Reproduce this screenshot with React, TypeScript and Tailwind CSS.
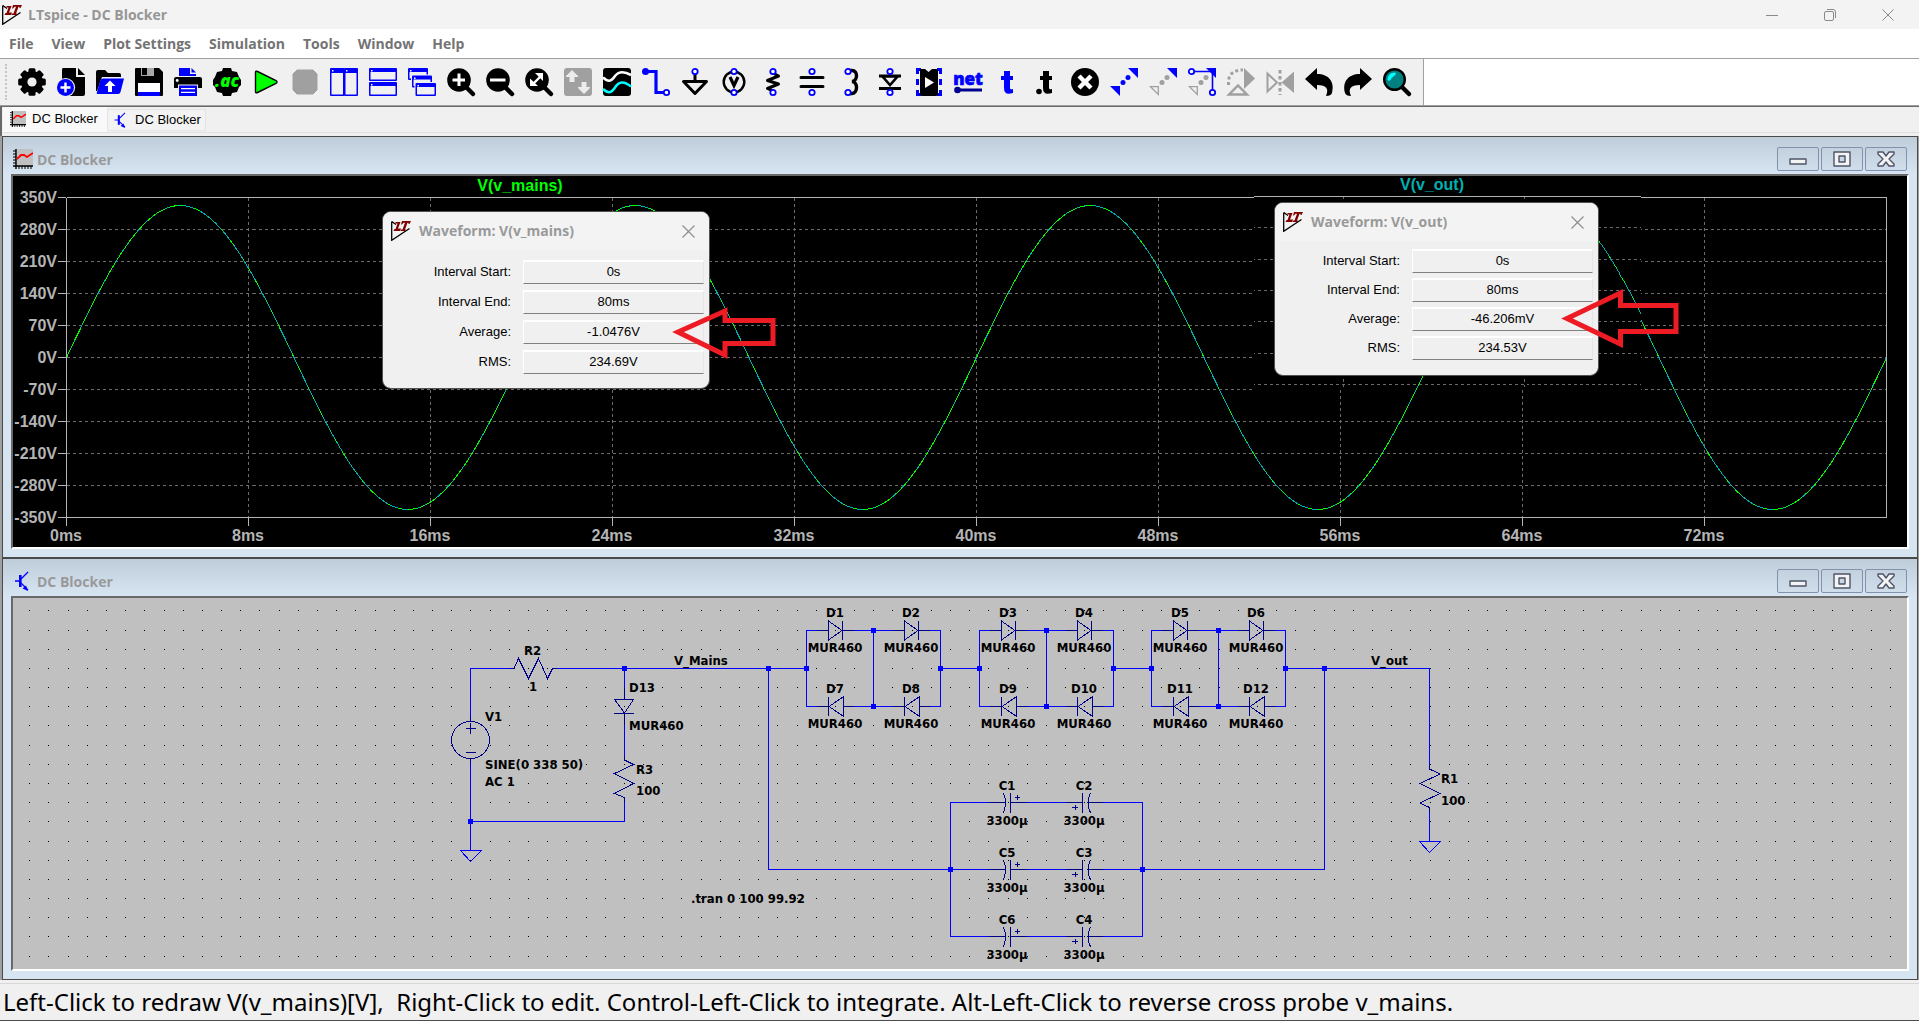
import React, { useId } from "react";

const GRAY = "#a0a0a0";
const BLUE = "#0000ff";
const NAVY = "#000084";

/* ---------- Toolbar icons ---------- */

const Pin = ({ x, y }: { x: number; y: number }) => (
  <circle cx={x} cy={y} r={2.7} fill="#fff" stroke={BLUE} strokeWidth={1.8} />
);

const Lens = ({ children }: { children?: React.ReactNode }) => (
  <>
    <circle cx={12} cy={12} r={11.8} />
    <path d="M18 18L26 26" stroke="#000" strokeWidth={4.5} strokeLinecap="round" />
    {children}
  </>
);

const MiniWindow = ({ x, y, w, h, bar = 5 }: { x: number; y: number; w: number; h: number; bar?: number }) => (
  <>
    <rect x={x} y={y} width={w} height={h} rx={1} fill={BLUE} />
    <rect x={x + 1.5} y={y + bar} width={w - 3} height={h - bar - 1.5} fill="#f0f0f0" />
    <rect x={x + 2} y={y + 2} width={1.5} height={1.5} fill="#fff" />
  </>
);

const Teeth = ({ r }: { r: number }) => (
  <>
    {[0, 45, 90, 135, 180, 225, 270, 315].map((a) => (
      <rect key={a} x={10.5} y={14 - r} width={7} height={8} rx={1.5} transform={`rotate(${a} 14 14)`} />
    ))}
  </>
);

const DragCorners = ({ from, mid }: { from: React.ReactNode; mid: string }) => (
  <>
    <path d="M18 0H28V10Z" fill={BLUE} />
    <circle cx={18} cy={9.5} r={2.5} fill={mid} />
    <circle cx={13} cy={14.5} r={2.5} fill={mid} />
    {from}
  </>
);

const tools: { name: string; icon: React.ReactNode }[] = [
  {
    name: "Settings",
    icon: (
      <>
        <Teeth r={13.8} />
        <circle cx={14} cy={14} r={11} />
        <circle cx={14} cy={14} r={4.6} fill="#f0f0f0" />
      </>
    ),
  },
  {
    name: "New schematic",
    icon: (
      <>
        <path d="M6 0H19V9H28V26Q28 28 26 28H8Q5 28 5 26V2Q5 0 6 0Z" />
        <path d="M21 0L28 7H21Z" />
        <circle cx={8.5} cy={19.5} r={9.6} fill="#f0f0f0" />
        <circle cx={8.5} cy={19.5} r={8.5} fill={BLUE} />
        <path d="M8.5 14.5V24.5M3.5 19.5H13.5" stroke="#fff" strokeWidth={2.4} />
      </>
    ),
  },
  {
    name: "Open",
    icon: (
      <>
        <path d="M0 4Q0 2 2 2H9L12 5H23Q25 5 25 7V9H6L1 23H0Z" />
        <path d="M7 10.5H28L24.5 24Q24 26 22 26H2Q0 26 1 24L4.5 12Q5 10.5 7 10.5Z" fill={BLUE} />
        <path d="M14 12.5L19.5 18H16V24H12V18H8.5Z" fill="#fff" />
      </>
    ),
  },
  {
    name: "Save",
    icon: (
      <>
        <path d="M1 0H6V8H19V0H24L28 4V27Q28 28 27 28H1Q0 28 0 27V1Q0 0 1 0Z" />
        <path d="M6 0H19V8H6Z" fill="#a8a8a8" />
        <path d="M7 0H12V7H7Z" />
        <path d="M3 15H25V24H3Z" fill="#fff" />
        <path d="M3 24H25V28H3Z" fill={BLUE} />
      </>
    ),
  },
  {
    name: "Print",
    icon: (
      <>
        <path d="M5 8V0H16V6H22V8Z" fill={BLUE} />
        <path d="M17.5 0L22 4.5H17.5Z" fill={BLUE} />
        <path d="M2 9H26Q28 9 28 11V20H0V11Q0 9 2 9Z" />
        <circle cx={3.2} cy={12.5} r={1.4} fill="#fff" />
        <path d="M4 16.5H24V28H4Z" fill="#f0f0f0" />
        <path d="M5 17.5H23V28H5Z" fill={BLUE} />
        <path d="M7 20.7H21M7 24.4H21" stroke="#fff" strokeWidth={1.3} />
      </>
    ),
  },
  {
    name: "AC analysis",
    icon: (
      <>
        <path d="M10 0H18L19 3L24 4L26 9L28 12V17L26 19L24 24L19 25L18 28H10L9 25L4 24L2 19L0 17V12L2 9L4 4L9 3Z" />
        <text x={14} y={19} textAnchor="middle" fill="#00ff00" className="font-['Open_Sans',sans-serif] text-[17px] font-extrabold italic">
          .ac
        </text>
      </>
    ),
  },
  {
    name: "Run",
    icon: <path d="M3.5 4.5Q3.5 2.5 5.5 3.5L24 12.5Q26 14 24 15.5L5.5 24.5Q3.5 25.5 3.5 23.5Z" fill="#00ff00" stroke="#000" strokeWidth={1.4} />,
  },
  { name: "Stop", icon: <path d="M6 2H22L26 6V22L22 26H6L2 22V6Z" fill={GRAY} stroke={GRAY} strokeLinejoin="round" /> },
  {
    name: "Tile vertically",
    icon: (
      <>
        <MiniWindow x={0} y={0} w={14.5} h={28} />
        <MiniWindow x={14} y={0} w={14} h={28} />
      </>
    ),
  },
  {
    name: "Tile horizontally",
    icon: (
      <>
        <MiniWindow x={0} y={0} w={28} h={13} bar={4} />
        <MiniWindow x={0} y={14} w={28} h={14} bar={4} />
      </>
    ),
  },
  {
    name: "Cascade",
    icon: (
      <>
        <MiniWindow x={0} y={0} w={20} h={12} bar={4} />
        <rect x={3} y={6.5} width={21.5} height={13} fill="#f0f0f0" />
        <MiniWindow x={4} y={7.5} w={20} h={12} bar={4} />
        <rect x={6.5} y={14} width={21.5} height={13} fill="#f0f0f0" />
        <MiniWindow x={7.5} y={15} w={20.5} h={13} bar={4} />
      </>
    ),
  },
  { name: "Zoom in", icon: <Lens><path d="M12 5.5V18M5.5 12H18" stroke="#fff" strokeWidth={3} /></Lens> },
  { name: "Zoom out", icon: <Lens><path d="M4 12H19.5" stroke="#fff" strokeWidth={3} /></Lens> },
  {
    name: "Zoom to fit",
    icon: (
      <Lens>
        <path d="M8 16L16 8" stroke="#fff" strokeWidth={2.4} />
        <path d="M10 5H18V13ZM5 10.5V18H13Z" fill="#fff" />
      </Lens>
    ),
  },
  {
    name: "Autorange",
    icon: (
      <>
        <rect width={28} height={28} rx={3} fill={GRAY} />
        <path d="M8 2L14 8V9H10.5V14H5.5V9H2V8ZM20 26L14 20V19H17.5V14H22.5V19H26V20Z" fill="#ececec" />
      </>
    ),
  },
  {
    name: "Waveforms",
    icon: (
      <>
        <rect width={28} height={28} rx={3} />
        <path d="M0 9.5C5 14 8 14 12 8C16 3 21 3 28 7" fill="none" stroke="#fff" strokeWidth={2.6} />
        <path d="M0 21C5 25.5 8 25.5 12 19.5C16 13 21 13 28 18.5" fill="none" stroke="#00ffff" strokeWidth={2.6} />
      </>
    ),
  },
  {
    name: "Wire",
    icon: (
      <>
        <path d="M3 3.5H14V24.5H22" fill="none" stroke={BLUE} strokeWidth={3.2} />
        <circle cx={3.5} cy={3.5} r={3.5} fill={BLUE} />
        <Pin x={24.5} y={24.5} />
      </>
    ),
  },
  {
    name: "Ground",
    icon: (
      <>
        <path d="M14 5V14" stroke="#000" strokeWidth={3} />
        <path d="M2.5 13.5H25.5L14 25.5Z" fill="#f0f0f0" stroke="#000" strokeWidth={3} strokeLinejoin="round" />
        <Pin x={14} y={3.5} />
      </>
    ),
  },
  {
    name: "Voltage source",
    icon: (
      <>
        <circle cx={14} cy={14} r={10.3} fill="none" stroke="#000" strokeWidth={2.4} />
        <path d="M10 9L14 17.5L18 9" fill="none" stroke="#000" strokeWidth={3.2} />
        <Pin x={14} y={3.5} />
        <Pin x={14} y={24.5} />
      </>
    ),
  },
  {
    name: "Resistor",
    icon: (
      <>
        <path d="M14 5L19.5 8L8.5 12.5L19.5 16L8.5 20.5L14 23" fill="none" stroke="#000" strokeWidth={3} strokeLinejoin="round" />
        <Pin x={14} y={3.5} />
        <Pin x={14} y={24.5} />
      </>
    ),
  },
  {
    name: "Capacitor",
    icon: (
      <>
        <path d="M3 9.5H25M3 18.5H25" stroke="#000" strokeWidth={3} strokeLinecap="round" />
        <Pin x={14} y={3.5} />
        <Pin x={14} y={24.5} />
      </>
    ),
  },
  {
    name: "Inductor",
    icon: (
      <>
        <path d="M12 2.5H15C21 2.5 21 13 15 13.5C21 14 21 25 15 25.5H12" fill="none" stroke="#000" strokeWidth={3.4} />
        <Pin x={11} y={3.5} />
        <Pin x={11} y={24.5} />
      </>
    ),
  },
  {
    name: "Diode",
    icon: (
      <>
        <path d="M3 8H25M3 20.5H25" stroke="#000" strokeWidth={3} />
        <path d="M6.5 8.5L14 17L21.5 8.5Z" fill="#f0f0f0" stroke="#000" strokeWidth={2.6} />
        <Pin x={14} y={3.5} />
        <Pin x={14} y={24.5} />
      </>
    ),
  },
  {
    name: "Component",
    icon: (
      <>
        <path d="M6 1.5H2.5V6M2.5 11V17M2.5 22V26.5H6M22 1.5H25.5V6M25.5 11V17M25.5 22V26.5H22" stroke={BLUE} strokeWidth={3} fill="none" />
        <path d="M6 1H10L13.5 4L17 1H21Q23 1 23 3V26Q23 28 21 28H7Q5 28 5 26V2Z" />
        <path d="M10 9L19 14.5L10 20Z" fill="#fff" />
      </>
    ),
  },
  {
    name: "Net name",
    icon: (
      <>
        <text x={14} y={17} textAnchor="middle" fill={BLUE} stroke={BLUE} strokeWidth={0.6} className="font-['Open_Sans',sans-serif] text-[17px] font-extrabold">
          net
        </text>
        <path d="M3 22H28" stroke="#000090" strokeWidth={3} />
        <circle cx={3.5} cy={22} r={3.3} fill="#000090" />
      </>
    ),
  },
  {
    name: "Text",
    icon: <path d="M11 3H17V8H20V12H17V20Q17 22 20 21V25Q11 28 11 20V12H8V8H11Z" fill={BLUE} />,
  },
  {
    name: "SPICE directive",
    icon: (
      <>
        <path d="M11 3H17V8H20V12H17V20Q17 22 20 21V25Q11 28 11 20V12H8V8H11Z" />
        <circle cx={7} cy={23.5} r={2.8} />
      </>
    ),
  },
  {
    name: "Delete",
    icon: (
      <>
        <circle cx={14} cy={14} r={14} />
        <path d="M8 8L20 20M20 8L8 20" stroke="#fff" strokeWidth={4.4} />
      </>
    ),
  },
  { name: "Move", icon: <DragCorners from={<path d="M0 18H10V28Z" fill={BLUE} />} mid={BLUE} /> },
  { name: "Drag", icon: <DragCorners from={<path d="M1.5 18.7H9.3V26.5Z" fill="none" stroke={GRAY} strokeWidth={1.3} />} mid={GRAY} /> },
  {
    name: "Stretch",
    icon: (
      <>
        <DragCorners from={<path d="M1.5 18.7H9.3V26.5Z" fill="none" stroke={GRAY} strokeWidth={1.3} />} mid={GRAY} />
        <path d="M5 3.5H24.5V22" fill="none" stroke={BLUE} strokeWidth={1.6} />
        <Pin x={3.5} y={3.5} />
        <Pin x={24.5} y={24.5} />
      </>
    ),
  },
  {
    name: "Rotate",
    icon: (
      <>
        <path d="M1.5 17V13C2 6 7 2 16 2" fill="none" stroke={GRAY} strokeWidth={3} strokeDasharray="3 2.5" />
        <path d="M17 0L28 10.5L17 21Z" fill={GRAY} />
        <path d="M2 26.5L11 17.5L20 26.5Z" fill="none" stroke={GRAY} strokeWidth={2.4} />
      </>
    ),
  },
  {
    name: "Mirror",
    icon: (
      <>
        <path d="M1.5 5.5L11 14.5L1.5 23.5Z" fill="none" stroke={GRAY} strokeWidth={2} />
        <path d="M28 3.5V25L15.5 14.5Z" fill={GRAY} />
        <path d="M14 2V27" stroke={GRAY} strokeWidth={3} strokeDasharray="3.5 2.5" />
      </>
    ),
  },
  { name: "Undo", icon: <path d="M0 11L12 0V6C24 6 30 14 27 25Q26 28 21 28C24 21 22 17 12 17V22Z" /> },
  { name: "Redo", icon: <path d="M28 11L16 0V6C4 6 -2 14 1 25Q2 28 7 28C4 21 6 17 16 17V22Z" /> },
  {
    name: "Search",
    icon: (
      <>
        <path d="M18 18L26 26" stroke="#000" strokeWidth={4.5} strokeLinecap="round" />
        <circle cx={11.5} cy={11.5} r={10.3} fill="#008080" stroke="#000" strokeWidth={2.4} />
        <path d="M4.5 12C4.5 7.5 7.5 4.5 12 4.5Q14 6 11 8T7.5 12Q6 13.5 4.5 12Z" fill="#00ffff" />
      </>
    ),
  },
];

/* ---------- Small window icons ---------- */

const LogoIcon = () => (
  <svg viewBox="0 0 20 20" className="size-5 shrink-0">
    <path d="M.7 .5V19.3L18.5 7.5M.7 .5L5 3.5" fill="none" stroke="#000" strokeWidth={1.3} />
    <path d="M4.5 1H9.5L7 7.5H10L9 10H2.5L3.5 8H4.5L6.5 2.5H4.5ZM11 0H20L18.5 3H17.5V1.8H16.5L14 8.5H15L14.5 10H9.5L10 8.5H11.5L14 1.8H12.5L11 3.5H10Z" fill="#800000" />
  </svg>
);

const PlotIcon = ({ className }: { className: string }) => (
  <svg viewBox="0 0 20 20" className={className}>
    <rect x={2} width={18} height={18} fill="#c0c0c0" />
    <path d="M3 0V20M0 17H20" stroke="#000" strokeWidth={1.4} />
    <path d="M0 2H3M0 5H3M0 8H3M0 11H3M0 14H3M6 17V20M9 17V20M12 17V20M15 17V20M18 17V20" stroke="#000" />
    <path d="M4 10L8 6H11L14 8L20 4" fill="none" stroke="#ff0000" strokeWidth={1.8} />
  </svg>
);

const TransistorIcon = ({ className }: { className: string }) => (
  <svg viewBox="0 0 20 20" className={className}>
    <path d="M2 10H7M8 8L15 1M8 12L15 19" stroke={BLUE} strokeWidth={1.3} />
    <path d="M7.3 4V16" stroke={BLUE} strokeWidth={2.6} />
    <path d="M15 20L9.5 17.5L13 14.5Z" fill={BLUE} />
  </svg>
);

/* ---------- MDI child window ---------- */

const mdiButtons = [
  { name: "Minimize", d: "M1 8H17V13H1Z" },
  { name: "Maximize", d: "M1 1H17V15H1ZM6 5H12V11H6Z" },
  { name: "Close", d: "M1 1H6L9 5L12 1H17V3L12 8L17 13V15H12L9 11L6 15H1V13L6 8L1 3V1Z" },
];

const ChildWindow = ({ icon, children }: { icon: React.ReactNode; children: React.ReactNode }) => (
  <section className="flex min-h-0 flex-1 flex-col border border-[#4a4a4a] bg-[#d7e4f2] px-2 pb-2">
    <header className="-mx-2 flex h-[37px] shrink-0 items-end justify-between bg-linear-to-b from-[#bfcddb] to-[#d7e4f2] pr-2.5 pb-[3px] pl-2.5">
      <div className="flex h-6 items-center gap-1">
        {icon}
        <h2 className="pt-0.5 font-['Open_Sans',sans-serif] text-sm font-bold text-[#999]">DC Blocker</h2>
      </div>
      <div className="flex gap-0.5">
        {mdiButtons.map((b) => (
          <button
            key={b.name}
            aria-label={b.name}
            className="flex h-6 w-[42px] items-center justify-center rounded-xs border border-[#8391ad] bg-linear-to-b from-[#c3d0de] to-[#d0ddea]"
          >
            <svg viewBox="0 0 18 16" className="h-4 w-[18px]">
              <path d={b.d} fill="#f4f4f4" fillRule="evenodd" stroke="#4d5468" strokeWidth={1.4} strokeLinejoin="round" />
            </svg>
          </button>
        ))}
      </div>
    </header>
    <div className="relative min-h-0 flex-1 border-2 border-t-[#696969] border-r-white border-b-white border-l-[#696969]">
      {children}
    </div>
  </section>
);

/* ---------- Waveform plot ---------- */

const LEFT = 66.5;
const RIGHT = 1886.5;
const TOP = 197.5;
const BOTTOM = 517.5;
const MS = 22.75;

// path of the 50 Hz wave between two times given in ms
const sine = (from: number, to: number) => {
  const pts: string[] = [];
  for (let t = from; t <= to + 0.001; t += 0.1) {
    const y = 357.5 - 152 * Math.sin((2 * Math.PI * t) / 20);
    pts.push(`${(LEFT + t * MS).toFixed(1)},${y.toFixed(1)}`);
  }
  return pts.join(" ");
};

const rising = [[0, 5], [15, 25], [35, 45], [55, 65], [75, 80]];
const falling = [[5, 15], [25, 35], [45, 55], [65, 75]];

const Traces = () => (
  <g>
    <g stroke="#6c6c6c" strokeDasharray="3 3">
      {[1, 2, 3, 4, 5, 6, 7, 8, 9].map((i) => (
        <React.Fragment key={i}>
          <path d={`M${LEFT} ${TOP + i * 32}H${RIGHT}`} />
          <path d={`M${LEFT + i * 182} ${TOP}V${BOTTOM}`} />
        </React.Fragment>
      ))}
    </g>
    <polyline points={sine(0, 80)} fill="none" stroke="#00b0b0" />
    <g fill="none" stroke="#00ff00">
      {rising.map(([a, b]) => (
        <polyline key={a} points={sine(a, b)} strokeDasharray="9 3 5 2 14 4" />
      ))}
      {falling.map(([a, b]) => (
        <polyline key={a} points={sine(a, b)} strokeDasharray="3 11 7 16 2 9" />
      ))}
    </g>
    <path d={`M${LEFT} ${TOP}H${RIGHT}`} stroke="#b4b4b4" />
  </g>
);

const Plot = () => {
  const clip = useId();
  return (
    <svg viewBox="13 176 1894 371" className="block size-full bg-black font-['Liberation_Sans',Arial,sans-serif] text-base font-bold">
      <g shapeRendering="crispEdges">
        <Traces />
        {/* overlapping copy of the plot around the right dialog */}
        <clipPath id={clip}>
          <rect x={1254} y={190} width={387} height={200} />
        </clipPath>
        <g clipPath={`url(#${clip})`}>
          <rect x={1254} y={190} width={387} height={200} />
          <g transform="translate(10.4 3.2) scale(.9945 .979)">
            <Traces />
          </g>
        </g>
        <g stroke="#b4b4b4" fill="none">
          <path d={`M${LEFT} ${TOP}V${BOTTOM}H${RIGHT}V${TOP}`} />
          {Array.from({ length: 11 }, (_, i) => (
            <path key={i} d={`M58 ${TOP + i * 32}H66`} />
          ))}
          {Array.from({ length: 10 }, (_, i) => (
            <path key={i} d={`M${LEFT + i * 182} 517V526`} />
          ))}
        </g>
      </g>
      <g fill="#b4b4b4">
        {Array.from({ length: 11 }, (_, i) => (
          <text key={i} x={57} y={203 + i * 32} textAnchor="end">
            {350 - i * 70}V
          </text>
        ))}
        {Array.from({ length: 10 }, (_, i) => (
          <text key={i} x={66 + i * 182} y={541} textAnchor="middle">
            {i * 8}ms
          </text>
        ))}
      </g>
      <text x={520} y={191} textAnchor="middle" fill="#00ff00">
        V(v_mains)
      </text>
      <text x={1432} y={190} textAnchor="middle" fill="#00b0b0">
        V(v_out)
      </text>
    </svg>
  );
};

interface WaveDialogProps {
  title: string;
  average: string;
  rms: string;
  className: string;
  bodyClass: string;
}

const WaveDialog = ({ title, average, rms, className, bodyClass }: WaveDialogProps) => {
  const id = useId();
  const rows = [
    ["Interval Start:", "0s"],
    ["Interval End:", "80ms"],
    ["Average:", average],
    ["RMS:", rms],
  ];
  return (
    <div role="dialog" aria-label={title} className={`absolute overflow-hidden rounded-[9px] border border-[#505050] bg-[#f0f0f0] ${className}`}>
      <div className="flex h-[38px] items-center gap-2 bg-[#f3f3f3] pr-3.5 pl-2">
        <LogoIcon />
        <h3 className="grow font-['Open_Sans',sans-serif] text-sm font-bold text-[#999]">{title}</h3>
        <button aria-label="Close">
          <svg viewBox="0 0 13 13" className="size-[13px]">
            <path d="M.5 .5L12.5 12.5M12.5 .5L.5 12.5" stroke="#8f8f8f" strokeWidth={1.2} />
          </svg>
        </button>
      </div>
      <div className={`flex flex-col pr-[5px] pl-3 font-['Liberation_Sans',Arial,sans-serif] text-[13px] text-black ${bodyClass}`}>
        {rows.map(([label, value], i) => (
          <div key={label} className="flex items-center gap-3">
            <label htmlFor={`${id}-${i}`} className="flex-1 text-right">
              {label}
            </label>
            <input
              id={`${id}-${i}`}
              readOnly
              value={value}
              className="h-6 w-[181px] border border-t-2 border-t-white border-r-[#e6e6e6] border-b-[#808080] border-l-white bg-[#f0f0f0] pb-0.5 text-center outline-none"
            />
          </div>
        ))}
      </div>
    </div>
  );
};

/* ---------- Schematic ---------- */

const PITCH = 19.182;

const gridDots = () => {
  let d = "";
  for (let r = 0; r < 19; r++) {
    for (let c = 0; c < 98; c++) {
      d += `M${Math.floor(29.75 + c * PITCH)} ${Math.floor(610.9 + r * PITCH)}h1v1h-1z`;
    }
  }
  return d;
};

const Label = ({ x, y, mid, children }: { x: number; y: number; mid?: boolean; children: React.ReactNode }) => (
  <text x={x} y={y} textAnchor={mid ? "middle" : "start"}>
    {children}
  </text>
);

const Junction = ({ x, y }: { x: number; y: number }) => <rect x={x - 2} y={y - 2} width={5} height={5} fill={BLUE} />;

const Diode = ({ x, y, name, flip }: { x: number; y: number; name: string; flip?: boolean }) => (
  <>
    <path
      d={
        flip
          ? `M${x + 0.5} ${y - 9}V${y + 10}M${x + 15} ${y - 9}L${x + 1} ${y + 0.5}L${x + 15} ${y + 10}Z`
          : `M${x + 14.5} ${y - 9}V${y + 10}M${x + 0.5} ${y - 9}L${x + 14} ${y + 0.5}L${x + 0.5} ${y + 10}Z`
      }
      stroke={NAVY}
    />
    <path d={`M${x - 11} ${y + 0.5}H${x}M${x + 15} ${y + 0.5}H${x + 26}`} stroke={NAVY} />
    <g stroke="none" fill="#000">
      <Label x={x + 7} y={y - 13} mid>
        {name}
      </Label>
      <Label x={x + 7} y={y + 22} mid>
        MUR460
      </Label>
    </g>
  </>
);

const Bridge = ({ x, names }: { x: number; names: string[] }) => (
  <>
    <path
      d={`M${x + 22} 630.5H${x + 0.5}V706.5H${x + 22}M${x + 37} 630.5H${x + 98}M${x + 37} 706.5H${x + 98}M${x + 113} 630.5H${x + 134.5}V706.5H${x + 113}M${x + 67.5} 630V707`}
      stroke={BLUE}
    />
    <Diode x={x + 22} y={630} name={names[0]} />
    <Diode x={x + 98} y={630} name={names[1]} />
    <Diode x={x + 22} y={706} name={names[2]} flip />
    <Diode x={x + 98} y={706} name={names[3]} flip />
    <Junction x={x} y={668} />
    <Junction x={x + 67} y={630} />
    <Junction x={x + 67} y={706} />
    <Junction x={x + 134} y={668} />
  </>
);

const CapRow = ({ y, left, right }: { y: number; left: string; right: string }) => (
  <>
    <path d={`M950 ${y + 0.5}H1005M1011 ${y + 0.5}H1082M1088 ${y + 0.5}H1143`} stroke={BLUE} />
    <g stroke={NAVY}>
      <path d={`M989 ${y + 0.5}H1005M1011 ${y + 0.5}H1027M1066 ${y + 0.5}H1082M1088 ${y + 0.5}H1103`} />
      <path d={`M1003.5 ${y - 9}Q1007.5 ${y} 1003.5 ${y + 11}M1010.5 ${y - 9}V${y + 11}`} />
      <path d={`M1090.5 ${y - 9}Q1085.5 ${y} 1090.5 ${y + 11}M1082.5 ${y - 9}V${y + 11}`} />
      <path d={`M1015 ${y - 4.5}H1020M1017.5 ${y - 7}V${y - 2}M1072 ${y + 5.5}H1078M1075.5 ${y + 3}V${y + 8}`} />
    </g>
    <g stroke="none" fill="#000">
      <Label x={1007} y={y - 12} mid>{left}</Label>
      <Label x={1007} y={y + 23} mid>3300µ</Label>
      <Label x={1084} y={y - 12} mid>{right}</Label>
      <Label x={1084} y={y + 23} mid>3300µ</Label>
    </g>
  </>
);

const Schematic = () => (
  <svg viewBox="13 598 1894 371" className="block size-full bg-[#c0c0c0] font-['DejaVu_Sans_Condensed','DejaVu_Sans',sans-serif] text-[13px] font-bold">
    <g shapeRendering="crispEdges" fill="none">
      <path d={gridDots()} fill="#000" />

      {/* wires */}
      <g stroke={BLUE}>
        <path d="M514 668.5H470.5V721M470.5 759V850M557 668.5H807M470 821.5H624.5V798M624.5 668V699M624.5 714V760" />
        <path d="M940 668.5H980M1113 668.5H1152M1286 668.5H1429.5V770M1429.5 808V841" />
        <path d="M768.5 668V869.5H950M1324.5 668V869.5H1143M950.5 802V937M1142.5 802V937" />
        <path d="M460.5 850.5H481.5L470.5 861.5ZM1419.5 841.5H1440.5L1429.5 852.5Z" />
      </g>

      {/* V1, R2, D13, R3, R1 */}
      <g stroke={NAVY}>
        <ellipse cx={470.5} cy={740} rx={19} ry={18.5} />
        <path d="M466 728.5H476M470.5 723V734M466 752.5H476M470.5 717V721M470.5 759V763" />
        <path d="M511 668.5H514L518.5 658.5L528.5 678.5L538.5 658.5L547.5 678.5L552.5 668.5H557" />
        <path d="M624.5 688V699M614.5 699.5H633.5L624.5 713ZM614 713.5H634M624.5 714V725" />
        <path d="M624.5 756V760L633.5 764.5L614.5 773.5L633.5 783.5L614.5 793.5L624.5 797.5V802" />
        <path d="M1429.5 765V769L1440 774L1420 783.5L1440 793.5L1420 803L1429.5 807.5V812" />
      </g>

      <Bridge x={806} names={["D1", "D2", "D7", "D8"]} />
      <Bridge x={979} names={["D3", "D4", "D9", "D10"]} />
      <Bridge x={1151} names={["D5", "D6", "D11", "D12"]} />
      <CapRow y={802} left="C1" right="C2" />
      <CapRow y={869} left="C5" right="C3" />
      <CapRow y={936} left="C6" right="C4" />

      <Junction x={470} y={821} />
      <Junction x={624} y={668} />
      <Junction x={768} y={668} />
      <Junction x={1324} y={668} />
      <Junction x={950} y={869} />
      <Junction x={1142} y={869} />
    </g>

    <Label x={524} y={655}>R2</Label>
    <Label x={529} y={691}>1</Label>
    <Label x={674} y={665}>V_Mains</Label>
    <Label x={629} y={692}>D13</Label>
    <Label x={629} y={730}>MUR460</Label>
    <Label x={485} y={721}>V1</Label>
    <Label x={485} y={769}>SINE(0 338 50)</Label>
    <Label x={485} y={786}>AC 1</Label>
    <Label x={636} y={774}>R3</Label>
    <Label x={636} y={795}>100</Label>
    <Label x={1371} y={665}>V_out</Label>
    <Label x={1441} y={783}>R1</Label>
    <Label x={1441} y={805}>100</Label>
    <Label x={691} y={903}>.tran 0 100 99.92</Label>
  </svg>
);

/* ---------- App ---------- */

const menus = ["File", "View", "Plot Settings", "Simulation", "Tools", "Window", "Help"];

const captionButtons = [
  { name: "Minimize", d: "M0 6.5H12" },
  { name: "Restore", d: "M.5 4Q.5 2.5 2 2.5H8Q9.5 2.5 9.5 4V10Q9.5 11.5 8 11.5H2Q.5 11.5 .5 10ZM3 .5H9Q11.5 .5 11.5 3V9" },
  { name: "Close", d: "M.5 .5L11.5 11.5M11.5 .5L.5 11.5" },
];

const App = () => {
  return (
    <div className="flex h-screen flex-col overflow-hidden border-b border-[#504a4a] bg-[#f0f0f0]">
      {/* Title bar */}
      <div className="flex h-[29px] shrink-0 items-center justify-between bg-[#f3f3f3] pr-0.5 pl-0.5">
        <div className="flex items-center gap-1.5">
          <LogoIcon />
          <h1 className="font-['Open_Sans',sans-serif] text-sm font-bold text-[#969696]">LTspice - DC Blocker</h1>
        </div>
        <div className="flex">
          {captionButtons.map((b) => (
            <button key={b.name} aria-label={b.name} className="flex h-[29px] w-[58px] items-center justify-center">
              <svg viewBox="0 0 12 12" className="size-3">
                <path d={b.d} fill="none" stroke="#8a8a8a" />
              </svg>
            </button>
          ))}
        </div>
      </div>

      {/* Menu */}
      <nav className="flex h-[30px] shrink-0 items-center gap-[18px] border-b border-[#a0a0a0] bg-white pl-[9px]">
        {menus.map((m) => (
          <button key={m} className="font-['Open_Sans',sans-serif] text-sm font-bold text-[#737373]">
            {m}
          </button>
        ))}
      </nav>

      {/* Toolbar */}
      <div className="flex h-[47px] shrink-0 border-b border-[#a0a0a0] bg-white">
        <div role="toolbar" className="flex items-center gap-[11px] border-r border-[#a0a0a0] bg-[#f0f0f0] pr-3">
          <div className="ml-[5px] h-9 border-l-2 border-dotted border-[#c4c4c4]" />
          {tools.map((t) => (
            <button key={t.name} title={t.name} aria-label={t.name} className="size-7 shrink-0">
              <svg viewBox="0 0 28 28" className="size-7 overflow-visible">
                {t.icon}
              </svg>
            </button>
          ))}
        </div>
      </div>

      {/* Document tabs */}
      <div className="flex h-[30px] shrink-0 items-start border-t border-l-2 border-[#696969] pl-px font-['Liberation_Sans',Arial,sans-serif] text-[13px] text-black">
        <div role="tablist" className="flex h-[26px] grow items-start border-b border-[#e0e0e0]">
          <button role="tab" aria-selected="true" className="flex h-[25px] w-[104px] items-center gap-1.5 bg-[#f9f9f9] pb-0.5 pl-[7px]">
            <PlotIcon className="size-4" />
            DC Blocker
          </button>
          <button role="tab" aria-selected="false" className="mt-0.5 flex h-[22px] w-[99px] items-center gap-1.5 border border-[#e4e4e4] bg-[#f3f3f3] pl-[5px]">
            <TransistorIcon className="size-4" />
            DC Blocker
          </button>
        </div>
      </div>

      {/* Workspace */}
      <main className="flex min-h-0 flex-1 flex-col border-r border-l-2 border-[#a0a0a0]">
        <ChildWindow icon={<PlotIcon className="size-5" />}>
          <Plot />
          <WaveDialog
            title="Waveform: V(v_mains)"
            average="-1.0476V"
            rms="234.69V"
            className="top-[35px] left-[369px] h-[178px] w-[328px]"
            bodyClass="gap-1.5 pt-2.5"
          />
          <WaveDialog
            title="Waveform: V(v_out)"
            average="-46.206mV"
            rms="234.53V"
            className="top-[26px] left-[1261px] h-[174px] w-[325px]"
            bodyClass="gap-[5px] pt-2"
          />
          <svg viewBox="13 176 1894 371" className="pointer-events-none absolute inset-0 size-full">
            <g fill="none" stroke="#ed1c24" strokeWidth={5}>
              <path d="M678 332L725 311V320.5H773V343.5H725V355Z" />
              <path d="M1567 318.5L1620.5 293V305.5H1676V331.5H1620.5V344Z" />
            </g>
          </svg>
        </ChildWindow>
        <ChildWindow icon={<TransistorIcon className="size-5" />}>
          <Schematic />
        </ChildWindow>
      </main>

      {/* Status bar */}
      <footer className="mt-[3px] flex h-[37px] shrink-0 items-center border-t border-[#d7d7d7] pl-[3px] font-['Noto_Sans',sans-serif] text-2xl whitespace-pre text-black">
        Left-Click to redraw V(v_mains)[V],  Right-Click to edit. Control-Left-Click to integrate. Alt-Left-Click to reverse cross probe v_mains.
      </footer>
    </div>
  );
};

export default App;
